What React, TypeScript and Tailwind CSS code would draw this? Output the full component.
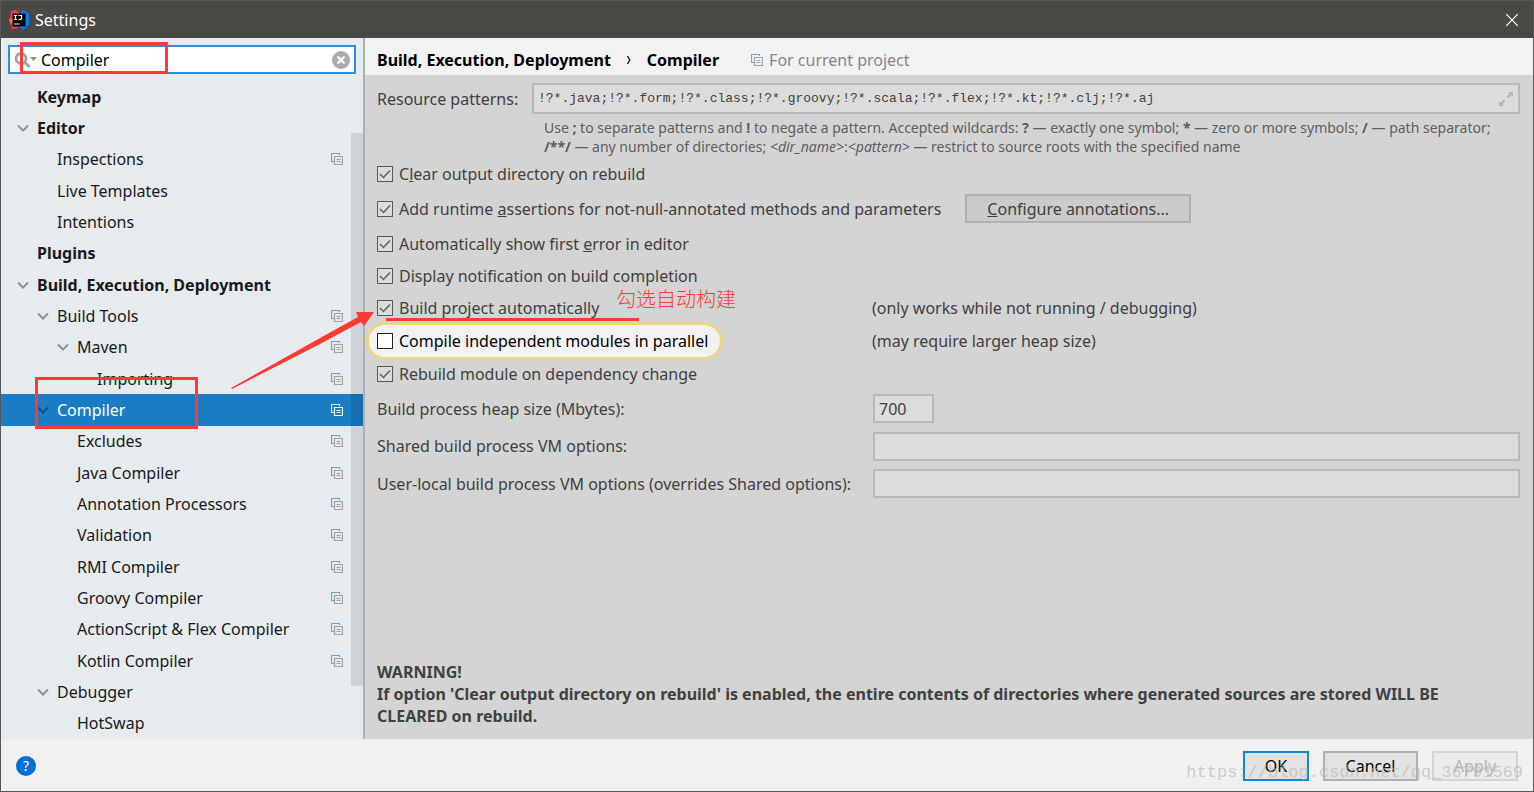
import { useState } from "react";

type TreeItem = {
  label: string;
  level: number;
  bold?: boolean;
  expanded?: boolean;
  project?: boolean;
};

const TREE: TreeItem[] = [
  { label: "Keymap", level: 0, bold: true },
  { label: "Editor", level: 0, bold: true, expanded: true },
  { label: "Inspections", level: 1, project: true },
  { label: "Live Templates", level: 1 },
  { label: "Intentions", level: 1 },
  { label: "Plugins", level: 0, bold: true },
  { label: "Build, Execution, Deployment", level: 0, bold: true, expanded: true },
  { label: "Build Tools", level: 1, expanded: true, project: true },
  { label: "Maven", level: 2, expanded: true, project: true },
  { label: "Importing", level: 3, project: true },
  { label: "Compiler", level: 1, expanded: true, project: true },
  { label: "Excludes", level: 2, project: true },
  { label: "Java Compiler", level: 2, project: true },
  { label: "Annotation Processors", level: 2, project: true },
  { label: "Validation", level: 2, project: true },
  { label: "RMI Compiler", level: 2, project: true },
  { label: "Groovy Compiler", level: 2, project: true },
  { label: "ActionScript & Flex Compiler", level: 2, project: true },
  { label: "Kotlin Compiler", level: 2, project: true },
  { label: "Debugger", level: 1, expanded: true },
  { label: "HotSwap", level: 2 },
];

const INDENT = ["pl-4", "pl-9", "pl-14", "pl-19"];

function IdeaLogo() {
  return (
    <svg viewBox="0 0 20 20" className="h-5 w-5 shrink-0">
      <path d="M2.500 1 7 0l4 3.500L5 12 .5 8z" fill="#fe315d" />
      <path d="M0 9.500 5 7v8l-3.500-1z" fill="#f97a12" />
      <path d="M3 19.500 2 14l8 1-1 3z" fill="#fe315d" />
      <path d="M11 3 14.500 0 20 4v11l-5.500 5L10 17z" fill="#087cfa" />
      <rect x="3.500" y="3.500" width="13" height="13" fill="#000" />
      <path
        d="M5 5.500h3M6.500 5.500v4M5 9.500h3M9.500 5.500h3v3l-1 1.200h-2M5 14h5.500"
        fill="none"
        stroke="#fff"
        strokeWidth="1.200"
      />
    </svg>
  );
}

function ProjectIcon({ selected = false }: { selected?: boolean }) {
  const back = selected ? "#d3e9f8" : "#6ba5c8";
  const front = selected ? "#ffffff" : "#a0a3a5";
  return (
    <svg viewBox="0 0 12 12" className="h-3 w-3 shrink-0" fill="none">
      <path d="M3 8.500H.5V.5h8V2" stroke={back} strokeWidth="1.200" />
      <path d="M3.500 3.500h8v8h-8z" stroke={front} strokeWidth="1.200" />
      <path d="M5.500 6.500h4M5.500 8.500h4" stroke={front} />
    </svg>
  );
}

function Chevron({ selected }: { selected: boolean }) {
  return (
    <svg viewBox="0 0 12 8" className="h-2 w-3" fill="none">
      <path
        d="M1 1.500 6 6.500l5-5"
        stroke={selected ? "#14507f" : "#8e9396"}
        strokeWidth="2"
      />
    </svg>
  );
}

function CheckOption({
  children,
  checked = true,
  highlighted = false,
}: {
  children: React.ReactNode;
  checked?: boolean;
  highlighted?: boolean;
}) {
  return (
    <label
      className={
        highlighted
          ? "-ml-[11px] flex h-[38px] items-center gap-1.5 rounded-full border-3 border-[#ecd584] bg-[#f2f2f2] pr-3 pl-2 text-black"
          : "flex items-center gap-1.5"
      }
    >
      <span className="relative h-4 w-4 shrink-0">
        <input
          type="checkbox"
          defaultChecked={checked}
          className={
            highlighted
              ? "peer block h-4 w-4 appearance-none border border-[#222] bg-white"
              : "peer block h-4 w-4 appearance-none border border-[#5a5a5a] bg-[#dcdcdc]"
          }
        />
        <svg
          viewBox="0 0 16 16"
          className="pointer-events-none absolute inset-0 hidden peer-checked:block"
          fill="none"
        >
          <path d="m3 8 3.500 3.500 6.500-7" stroke="#5f5f5f" strokeWidth="1.500" />
        </svg>
      </span>
      <span>{children}</span>
    </label>
  );
}

const FIELD = "border-2 border-[#bababa] bg-[#dcdcdc] outline-none";

export default function App() {
  const [query, setQuery] = useState("Compiler");
  const [selected, setSelected] = useState("Compiler");

  return (
    <div className="relative flex h-screen flex-col overflow-hidden border border-[#5a5856] bg-[#f0f0f0] font-['Noto_Sans',sans-serif] text-base leading-5 text-[#1a1a1a]">
      <header className="flex h-[37px] shrink-0 items-center gap-1.5 bg-[#4b4946] pr-[15px] pl-2 text-white">
        <IdeaLogo />
        <h1>Settings</h1>
        <button type="button" aria-label="Close" className="ml-auto">
          <svg viewBox="0 0 12 12" className="h-3 w-3" stroke="#fff" strokeWidth="1.200">
            <path d="m0 0 12 12M12 0 0 12" />
          </svg>
        </button>
      </header>

      <div className="flex min-h-0 flex-1">
        <aside className="relative flex w-[364px] shrink-0 flex-col border-r-2 border-[#afafaf] bg-[#e5ebef]">
          <div className="mx-[7px] mt-[7px] flex h-[29px] shrink-0 items-center border-2 border-[#2d8fdb] bg-white px-1">
            <svg viewBox="0 0 24 18" className="h-[18px] w-6 shrink-0" fill="none">
              <circle cx="7" cy="7.500" r="5" stroke="#a2a2a2" strokeWidth="2.800" />
              <path d="m10.500 11 5 5" stroke="#a2a2a2" strokeWidth="3" />
              <path d="M16 6h7l-3.500 4z" fill="#8f8f8f" />
            </svg>
            <input
              type="text"
              aria-label="Search settings"
              value={query}
              onChange={(e) => setQuery(e.target.value)}
              className="min-w-0 flex-1 pl-[3px] text-black outline-none"
            />
            <button type="button" aria-label="Clear search" onClick={() => setQuery("")}>
              <svg viewBox="0 0 18 18" className="h-[18px] w-[18px]">
                <circle cx="9" cy="9" r="9" fill="#ababab" />
                <path d="m5.500 5.500 7 7m0-7-7 7" stroke="#fff" strokeWidth="2.200" />
              </svg>
            </button>
          </div>

          <nav className="mt-[7px] flex min-h-0 flex-1 flex-col">
            {TREE.map((item) => {
              const active = item.label === selected;
              return (
                <button
                  key={item.label}
                  type="button"
                  onClick={() => setSelected(item.label)}
                  className={`flex min-h-0 flex-1 items-center pr-5 text-left ${INDENT[item.level]} ${
                    active ? "bg-[#1b7cc4] text-white" : ""
                  } ${item.bold ? "font-bold" : ""}`}
                >
                  <span className="w-5 shrink-0">
                    {item.expanded && <Chevron selected={active} />}
                  </span>
                  <span className="flex-1 whitespace-nowrap">{item.label}</span>
                  {item.project && <ProjectIcon selected={active} />}
                </button>
              );
            })}
          </nav>
          <div className="absolute top-[95px] right-0 bottom-[53px] w-3 bg-black/10" />
        </aside>

        <main className="flex min-w-0 flex-1 flex-col bg-[#d4d4d4] text-[#414141]">
          <div className="flex h-[37px] shrink-0 items-center bg-[#f2f2f2] px-3 pt-1.5 text-black">
            <h2 className="flex items-center font-bold">
              Build, Execution, Deployment
              <svg viewBox="0 0 6 10" className="mx-[15px] h-2 w-1.5" fill="none">
                <path d="m1 0 3 5-3 5" stroke="#222" strokeWidth="1.800" />
              </svg>
              Compiler
            </h2>
            <span className="ml-8 flex items-center gap-1.5 text-[#868686]">
              <ProjectIcon />
              For current project
            </span>
          </div>

          <form className="flex flex-1 flex-col pr-[13px] pl-3" onSubmit={(e) => e.preventDefault()}>
            <div className="mt-2 flex h-[31px] shrink-0 items-center">
              <label htmlFor="patterns" className="w-[155px] shrink-0">
                Resource patterns:
              </label>
              <div className={`flex h-[31px] flex-1 items-center pr-1 ${FIELD}`}>
                <input
                  id="patterns"
                  type="text"
                  defaultValue="!?*.java;!?*.form;!?*.class;!?*.groovy;!?*.scala;!?*.flex;!?*.kt;!?*.clj;!?*.aj"
                  className="min-w-0 flex-1 pl-1 font-['Liberation_Mono',monospace] text-[13px] outline-none"
                />
                <svg viewBox="0 0 16 16" className="h-4 w-4 shrink-0" fill="#b3b7b8">
                  <path d="M10 1h5v5l-1.700-1.700-3 3-1.600-1.600 3-3zM6 15H1v-5l1.700 1.700 3-3 1.600 1.600-3 3z" />
                </svg>
              </div>
            </div>

            <p className="mt-1 ml-[167px] text-sm leading-[19px] whitespace-nowrap text-[#5e5e5e]">
              Use <b>;</b> to separate patterns and <b>!</b> to negate a pattern. Accepted wildcards: <b>?</b> —
              exactly one symbol; <b>*</b> — zero or more symbols; <b>/</b> — path separator;
              <br />
              <b>/**/</b> — any number of directories; <i>&lt;dir_name&gt;</i>:<i>&lt;pattern&gt;</i> — restrict to
              source roots with the specified name
            </p>

            <div className="flex h-[35px] items-center">
              <CheckOption>
                C<u>l</u>ear output directory on rebuild
              </CheckOption>
            </div>
            <div className="flex h-[35px] items-center gap-6">
              <CheckOption>
                Add runtime <u>a</u>ssertions for not-null-annotated methods and parameters
              </CheckOption>
              <button type="button" className="h-[29px] border-2 border-[#b0b0b0] bg-[#cbcbcb] px-5 leading-6">
                <u>C</u>onfigure annotations...
              </button>
            </div>
            <div className="flex h-[35px] items-center">
              <CheckOption>
                Automatically show first <u>e</u>rror in editor
              </CheckOption>
            </div>
            <div className="flex h-[30px] items-center">
              <CheckOption>Display notification on build completion</CheckOption>
            </div>
            <div className="grid h-[33px] grid-cols-[495px_1fr] items-center">
              <CheckOption>Build project automatically</CheckOption>
              <span>(only works while not running / debugging)</span>
            </div>
            <div className="flex h-[34px] items-center">
              <div className="flex w-[495px]">
                <CheckOption checked={false} highlighted>
                  Compile independent modules in parallel
                </CheckOption>
              </div>
              <span>(may require larger heap size)</span>
            </div>
            <div className="flex h-8 items-center">
              <CheckOption>Rebuild module on dependency change</CheckOption>
            </div>

            <div className="grid h-[37px] grid-cols-[496px_1fr] items-center">
              <label htmlFor="heap">Build process heap size (Mbytes):</label>
              <input id="heap" type="text" defaultValue="700" className={`h-[29px] w-[61px] px-1 ${FIELD}`} />
            </div>
            <div className="grid h-[38px] grid-cols-[496px_1fr] items-center">
              <label htmlFor="shared">Shared build process VM options:</label>
              <input id="shared" type="text" className={`h-[29px] px-1 ${FIELD}`} />
            </div>
            <div className="grid h-[37px] grid-cols-[496px_1fr] items-center">
              <label htmlFor="local">User-local build process VM options (overrides Shared options):</label>
              <input id="local" type="text" className={`h-[29px] px-1 ${FIELD}`} />
            </div>

            <p className="mt-auto mb-3 pr-10 font-bold leading-[22px]">
              WARNING!
              <br />
              If option 'Clear output directory on rebuild' is enabled, the entire contents of directories where
              generated sources are stored WILL BE CLEARED on rebuild.
            </p>
          </form>
        </main>
      </div>

      <footer className="flex h-[52px] shrink-0 items-center gap-3.5 px-[15px] pt-0.5 text-black">
        <button
          type="button"
          aria-label="Help"
          className="mr-auto h-5 w-5 rounded-full bg-[#0071d4] text-sm text-white"
        >
          ?
        </button>
        <button type="button" className="h-[30px] w-[66px] border-2 border-[#0f86e0] bg-[#e2e2e2]">
          OK
        </button>
        <button type="button" className="h-[30px] w-[95px] border-2 border-[#b0b0b0] bg-[#e2e2e2]">
          Cancel
        </button>
        <button type="button" disabled className="h-[30px] w-[86px] border-2 border-[#d4d4d4] bg-[#ebebeb] text-[#b5b5b5]">
          Apply
        </button>
      </footer>

      {/* hand-drawn notes over the dialog */}
      <div className="pointer-events-none absolute inset-0">
        <div className="absolute top-[41px] left-[19px] h-8 w-[148px] border-3 border-[#ff3a36]" />
        <div className="absolute top-[376px] left-[34px] h-[52px] w-[163px] border-3 border-[#ff3a36]" />
        <div className="absolute top-[317px] left-[385px] h-[3px] w-[253px] bg-[#ff3a36]" />
        <svg viewBox="0 0 144 80" className="absolute top-[309px] left-[230px] h-20 w-36" fill="#ff3a36">
          <path d="M0 78 89 28l38-21-2-5h18l-10 14-3-4-41 22L1 79z" />
        </svg>
        <span className="absolute top-[288px] left-[615px] font-['Noto_Sans_CJK_SC',sans-serif] text-xl leading-5 font-light text-[#ff3a36]">
          勾选自动构建
        </span>
        <span className="absolute right-2.5 bottom-2 font-['Liberation_Mono',monospace] text-[17px] leading-5 text-[#b4b4aa]/60">
          https://blog.csdn.net/qq_36791569
        </span>
      </div>
    </div>
  );
}
